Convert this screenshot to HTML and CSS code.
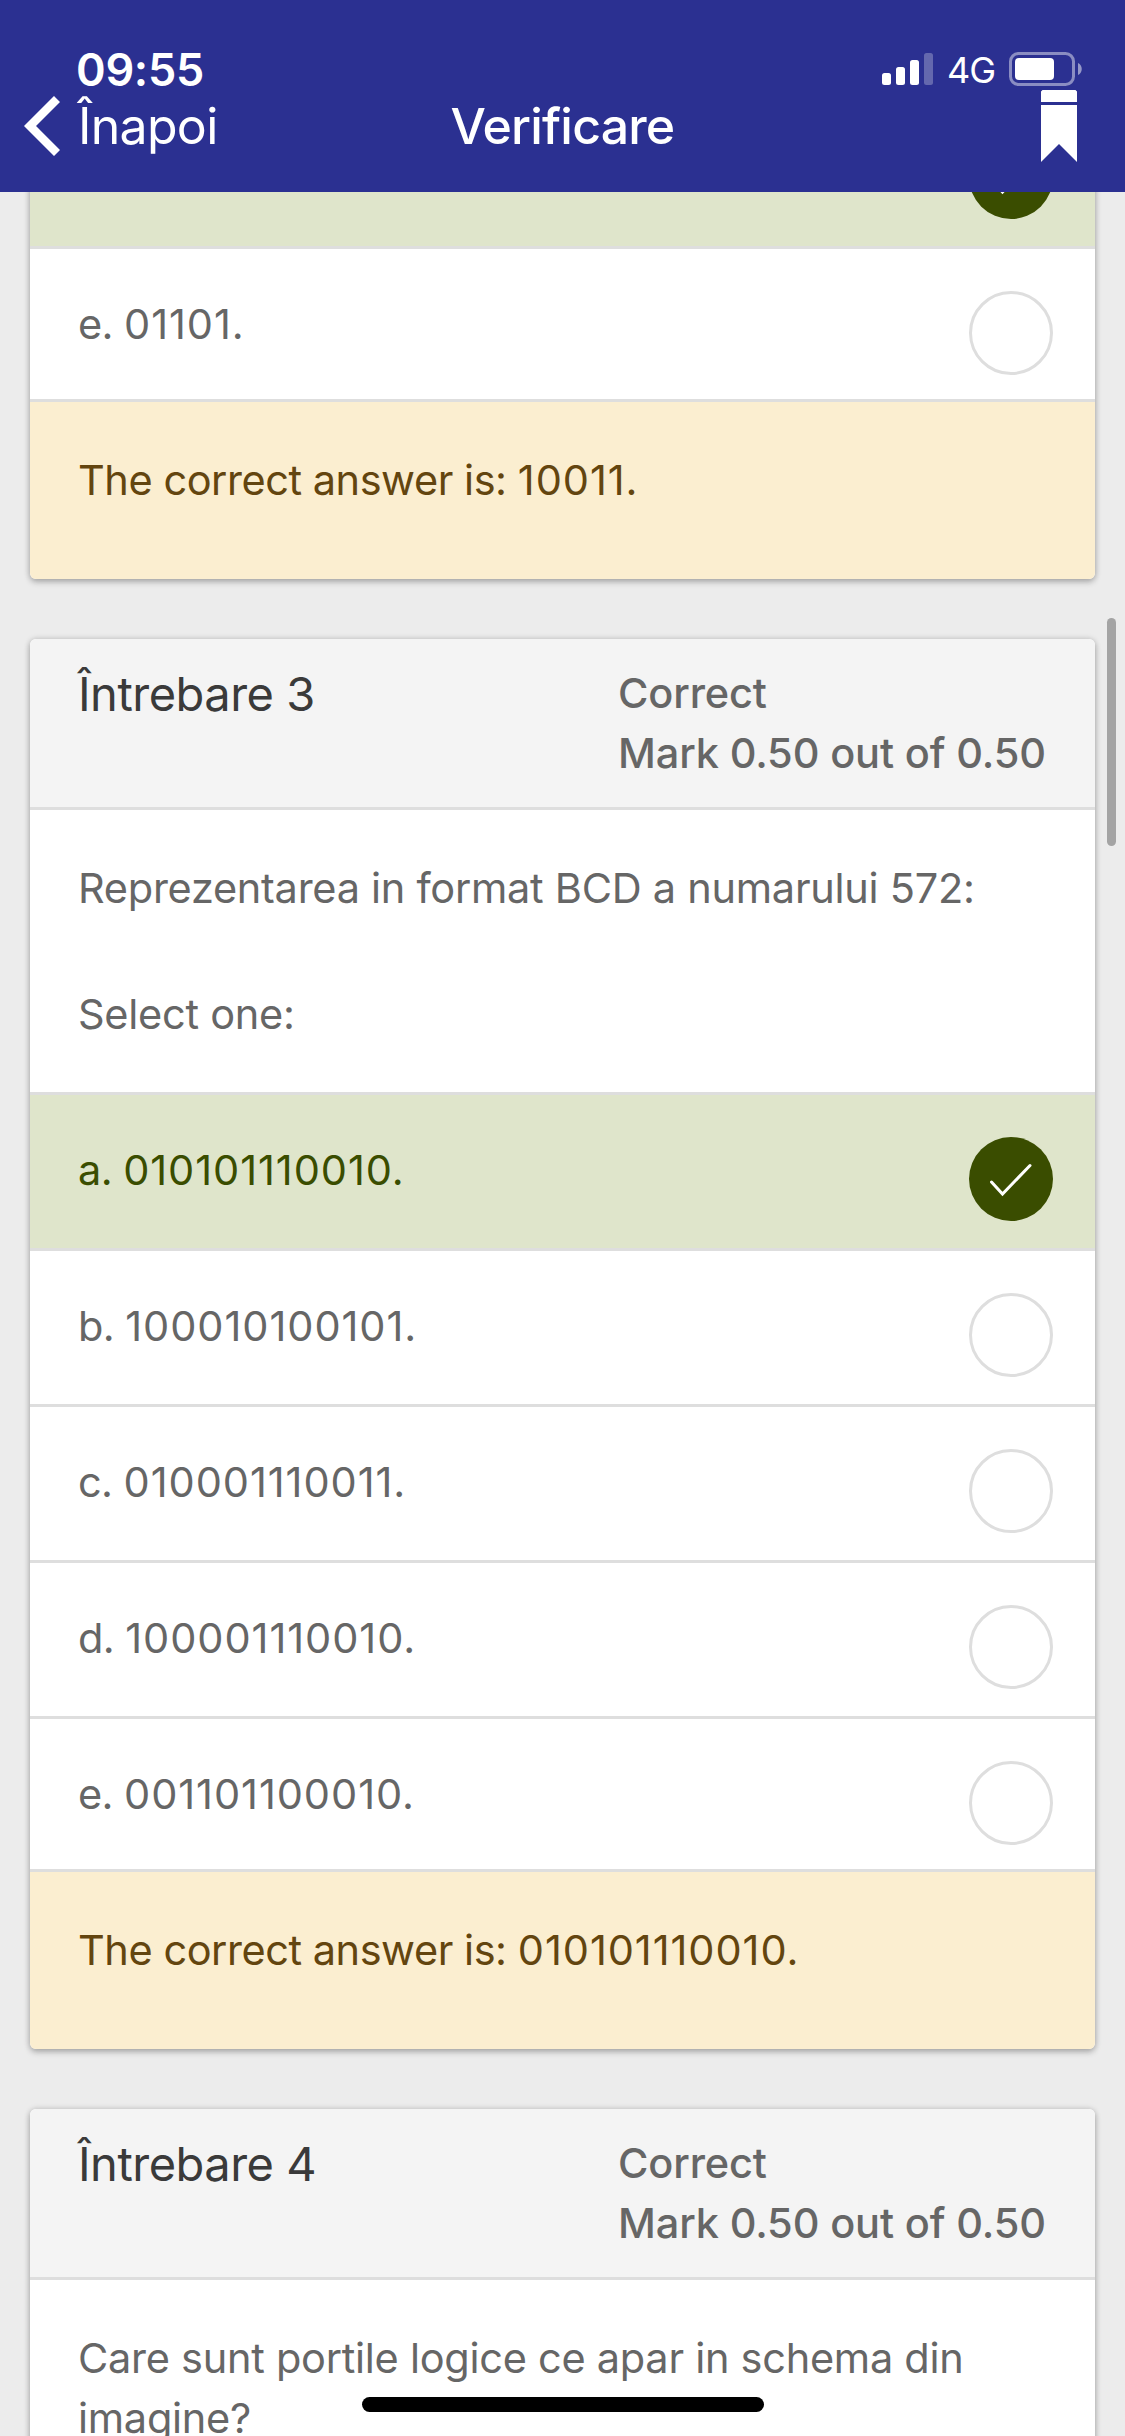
FILE: index.html
```html
<!DOCTYPE html>
<html lang="ro">
<head>
<meta charset="utf-8">
<title>Verificare</title>
<link rel="stylesheet" href="styles.css">
</head>
<body>
<header class="topbar">
  <div class="status">
    <span class="time">09:55</span>
    <div class="status-right">
      <svg class="signal" width="51" height="32" viewBox="0 0 51 32" fill="#fff"><rect y="20" width="9" height="12" rx="2.5"/><rect x="14" y="14" width="9" height="18" rx="2.5"/><rect x="28" y="7" width="9" height="25" rx="2.5"/><rect x="42" width="9" height="32" rx="2.5" opacity=".27"/></svg>
      <span class="network">4G</span>
      <svg class="battery" width="73" height="34" viewBox="0 0 73 34"><rect x="1.5" y="1.5" width="63" height="31" rx="8" fill="none" stroke="#fff" stroke-opacity=".45" stroke-width="3"/><rect x="6" y="6" width="39" height="22" rx="4" fill="#fff"/><path d="M69 11c5 2 5 10 0 12z" fill="#fff" fill-opacity=".5"/></svg>
    </div>
  </div>
  <nav class="nav">
    <a class="back"><svg width="36" height="60" viewBox="0 0 36 60"><path d="M33 3 6 30l27 27" fill="none" stroke="#fff" stroke-width="8.5"/></svg><span>Înapoi</span></a>
    <h1 class="title">Verificare</h1>
    <svg class="bookmark" width="36" height="72" viewBox="0 0 36 72" fill="#fff"><path d="M1.500 0h33L36 1.500V12H0V1.500zM0 15h36v57L18 54 0 72z"/></svg>
  </nav>
</header>
<main class="content">
  <section class="card card-first">
    <div class="option correct"><span></span><i class="radio checked"><svg width="84" height="84" viewBox="0 0 84 84"><path d="M22.500 45 33.500 57 61 28.500"/></svg></i></div>
    <div class="option last"><span>e. <b class="bits">01101.</b></span><i class="radio"></i></div>
    <p class="feedback">The correct answer is: <b class="bits">10011.</b></p>
  </section>
  <section class="card">
    <div class="card-head"><h2>Întrebare 3</h2><div class="grade">Correct<br>Mark 0.50 out of 0.50</div></div>
    <div class="question"><p>Reprezentarea in format BCD a numarului 572:</p><p>Select one:</p></div>
    <div class="option correct"><span>a. <b class="bits">010101110010.</b></span><i class="radio checked"><svg width="84" height="84" viewBox="0 0 84 84"><path d="M22.500 45 33.500 57 61 28.500"/></svg></i></div>
    <div class="option"><span>b. <b class="bits">100010100101.</b></span><i class="radio"></i></div>
    <div class="option"><span>c. <b class="bits">010001110011.</b></span><i class="radio"></i></div>
    <div class="option"><span>d. <b class="bits">100001110010.</b></span><i class="radio"></i></div>
    <div class="option last"><span>e. <b class="bits">001101100010.</b></span><i class="radio"></i></div>
    <p class="feedback">The correct answer is: <b class="bits">010101110010.</b></p>
  </section>
  <section class="card">
    <div class="card-head"><h2>Întrebare 4</h2><div class="grade">Correct<br>Mark 0.50 out of 0.50</div></div>
    <div class="question"><p>Care sunt portile logice ce apar in schema din<br>imagine?</p></div>
  </section>
</main>
<div class="scrollbar"></div>
<div class="home"></div>
</body>
</html>
```
FILE: styles.css
```css
* { box-sizing: border-box; margin: 0; padding: 0; }
body {
  width: 1125px; height: 2436px; overflow: hidden; position: relative;
  display: flex; flex-direction: column;
  background: #ececec; color: #666;
  font: 400 41.5px/60px Inter, "Liberation Sans", sans-serif;
}

/* Status bar and navigation */
.topbar { flex: none; height: 192px; background: #2b3091; color: #fff; }
.status { height: 90px; padding: 52px 43px 0 76px; display: flex; justify-content: space-between; align-items: flex-start; }
.time { font-size: 45px; font-weight: 600; line-height: 36px; letter-spacing: -.3px; }
.status-right { display: flex; align-items: flex-start; }
.signal { margin-top: 1px; }
.network { font-size: 36px; line-height: 36px; width: 76px; padding-left: 14px; letter-spacing: -1px; }
.nav { height: 102px; padding: 0 48px 0 24px; display: grid; grid-template-columns: 1fr auto 1fr; line-height: 72px; font-size: 50px; }
.back { display: flex; letter-spacing: -.7px; }
.back svg { margin: 6px 18px 0 0; }
.title { font-size: 50px; font-weight: 500; letter-spacing: -.8px; }
.bookmark { justify-self: end; }
.nav { padding-right: 24px; }
.bookmark { margin-right: 24px; }

/* Question cards */
.content { flex: 1; overflow: hidden; padding: 0 30px; }
.card { background: #fff; border-radius: 6px; overflow: hidden; margin-bottom: 60px; box-shadow: 0 3px 6px rgba(0,0,0,.24), 0 0 6px rgba(0,0,0,.16); }
.card-first { margin-top: -99px; }
.card-head { height: 171px; background: #f4f4f4; border-bottom: 3px solid #dedede; padding: 24px 48px; display: grid; grid-template-columns: 540px 1fr; }
h2 { font-size: 47px; font-weight: 400; color: #3a3a3a; padding-top: 1px; white-space: nowrap; letter-spacing: -.5px; }
.grade { font-weight: 500; white-space: nowrap; letter-spacing: -.15px; }
.question { min-height: 285px; padding: 48px 48px 0; display: flex; flex-direction: column; gap: 66px; border-bottom: 3px solid #dedede; letter-spacing: -.27px; }
.option { height: 156px; padding: 42px 42px 0 48px; border-bottom: 3px solid #dedede; display: flex; justify-content: space-between; align-items: flex-start; }
.option span { padding-top: 3px; letter-spacing: -.6px; }
.option.last { height: 153px; }
.correct { background: #dfe5cb; color: #3a4d00; }
.bits { font-weight: 400; letter-spacing: .95px; }
.radio { width: 84px; height: 84px; border: 3px solid #dedede; border-radius: 50%; }
.checked { border: 0; background: #3a4d00; }
.checked svg { display: block; fill: none; stroke: #fff; stroke-width: 3; stroke-linecap: round; }
.feedback { height: 177px; padding: 48px 48px; background: #fbeed0; color: #63450f; letter-spacing: -.45px; }

/* Overlays */
.scrollbar { position: absolute; left: 1107px; top: 618px; width: 9px; height: 228px; border-radius: 5px; background: #a4a4a4; }
.home { position: absolute; left: 362px; top: 2397px; width: 402px; height: 15px; border-radius: 8px; background: #000; }
```
